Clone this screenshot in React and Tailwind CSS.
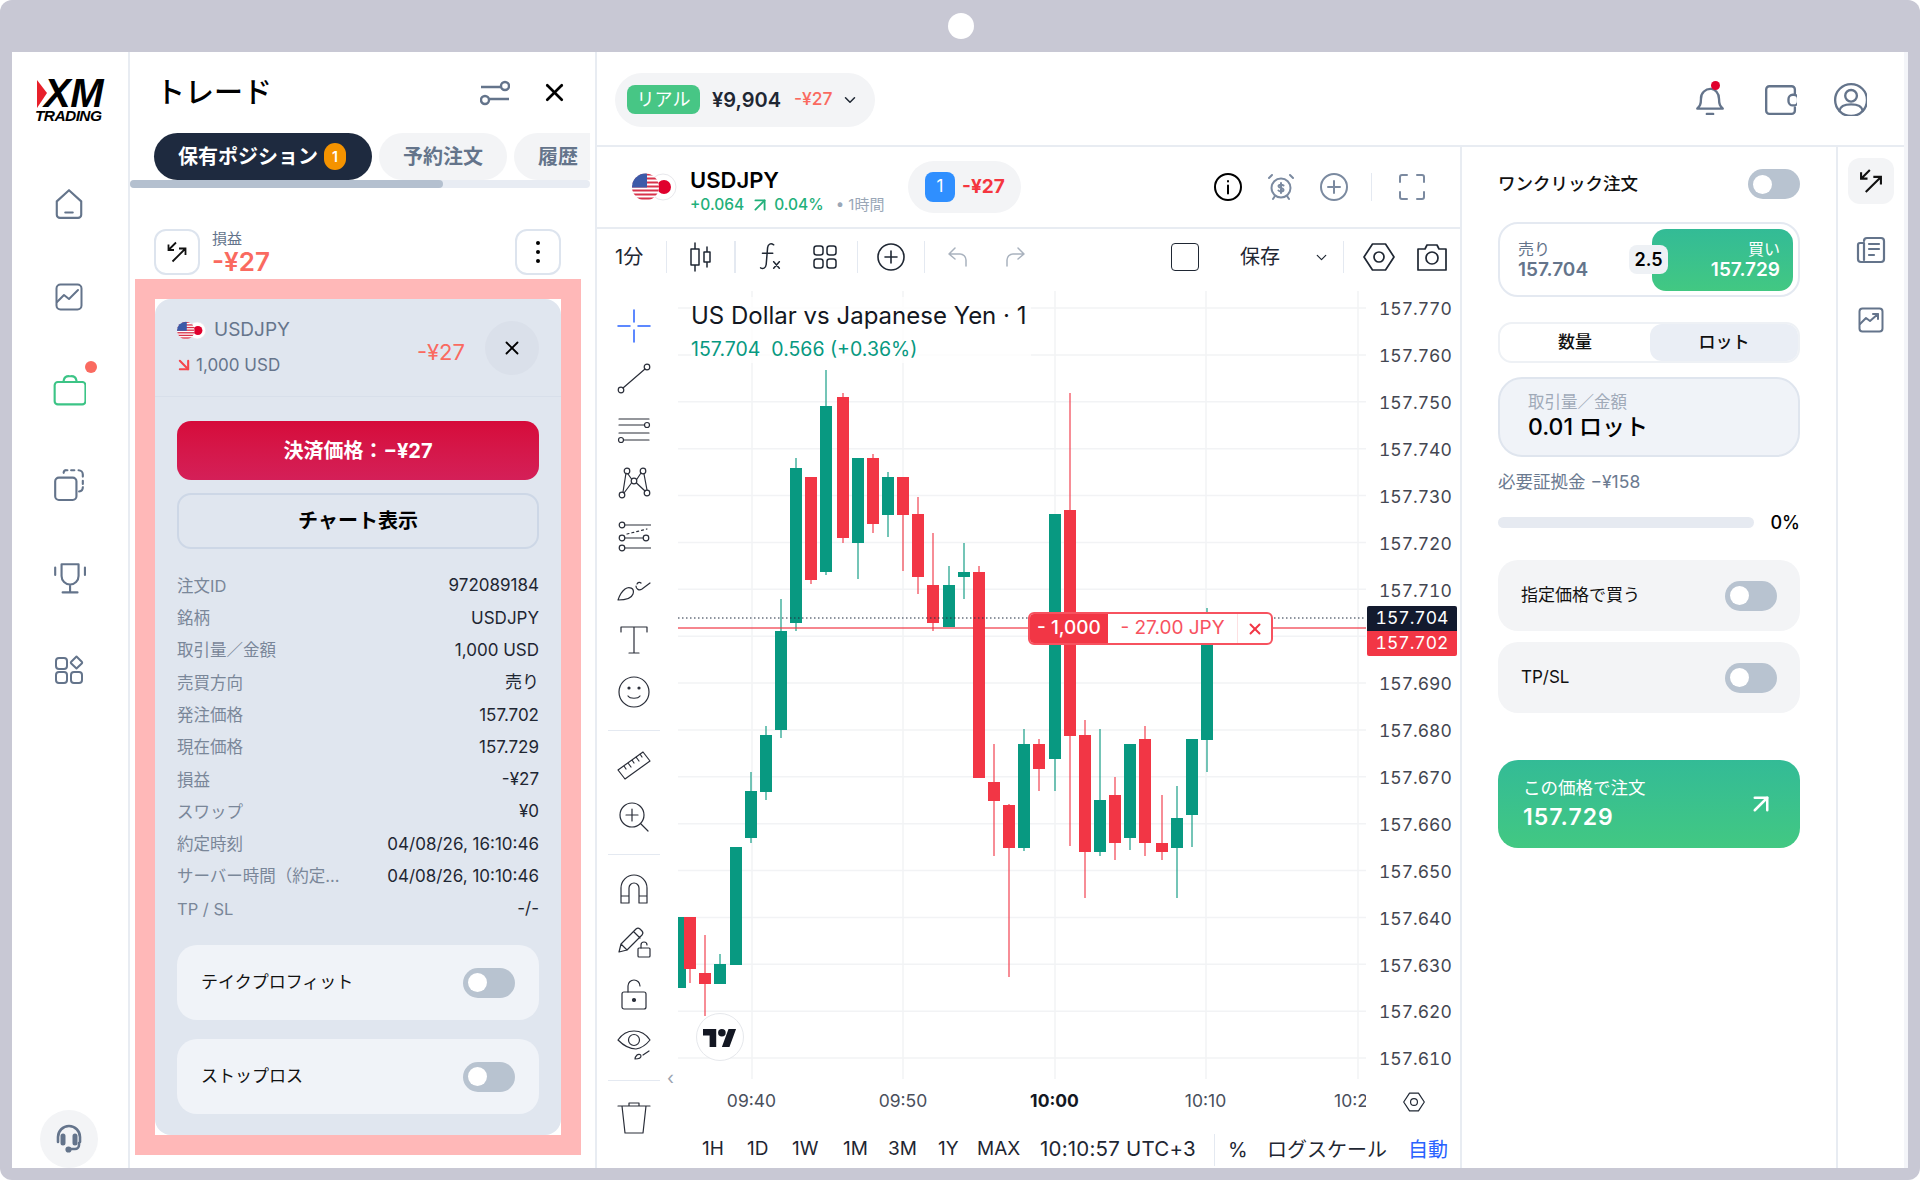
import { useId } from 'react'
import { X, ChevronDown, ArrowUpRight, ArrowDownRight } from 'lucide-react'

const SLATE = '#64748b'

const candles = [
  [680, 'g', 917, 917, 988, 988], [690, 'r', 917, 917, 969, 983], [705, 'r', 935, 973, 984, 1016],
  [720, 'g', 954, 964, 984, 984], [736, 'g', 847, 847, 965, 965], [751, 'g', 772, 791, 838, 843],
  [766, 'g', 726, 735, 792, 800], [781, 'g', 599, 631, 730, 738], [796, 'g', 458, 468, 623, 631],
  [811, 'r', 477, 477, 580, 584], [826, 'g', 370, 406, 572, 575], [843, 'r', 393, 397, 538, 543],
  [858, 'g', 458, 458, 543, 579], [873, 'r', 454, 458, 524, 533], [888, 'g', 472, 477, 515, 537],
  [903, 'r', 477, 477, 515, 571], [918, 'r', 497, 514, 577, 594], [933, 'r', 533, 585, 623, 631],
  [949, 'g', 566, 585, 627, 627], [964, 'g', 543, 572, 577, 599], [979, 'r', 566, 572, 778, 778],
  [994, 'r', 744, 782, 801, 856], [1009, 'r', 804, 805, 848, 977], [1024, 'g', 729, 744, 848, 851],
  [1039, 'r', 739, 744, 769, 791], [1055, 'g', 514, 514, 759, 791], [1070, 'r', 393, 510, 736, 846],
  [1085, 'r', 720, 735, 852, 898], [1100, 'g', 729, 800, 852, 856], [1115, 'r', 777, 795, 843, 860],
  [1130, 'g', 744, 744, 838, 850], [1145, 'r', 726, 739, 843, 856], [1162, 'r', 795, 843, 852, 860],
  [1177, 'g', 786, 818, 848, 898], [1192, 'g', 739, 739, 815, 847], [1207, 'g', 608, 627, 740, 772],
]

const prices = ['157.770', '157.760', '157.750', '157.740', '157.730', '157.720', '157.710', '', '157.690', '157.680', '157.670', '157.660', '157.650', '157.640', '157.630', '157.620', '157.610']

const details = [
  ['注文ID', '972089184'], ['銘柄', 'USDJPY'], ['取引量／金額', '1,000 USD'], ['売買方向', '売り'],
  ['発注価格', '157.702'], ['現在価格', '157.729'], ['損益', '-¥27'], ['スワップ', '¥0'],
  ['約定時刻', '04/08/26, 16:10:46'], ['サーバー時間（約定時間）', '04/08/26, 10:10:46'], ['TP / SL', '-/-'],
]

function Flag({ className }) {
  const id = useId()
  return (
    <svg viewBox="0 0 46 28" className={className}>
      <clipPath id={id}><circle cx="13.5" cy="14" r="13.5" /></clipPath>
      <circle cx="31" cy="14" r="13" fill="#fff" stroke="#e8e8ec" />
      <circle cx="32" cy="14" r="7" fill="#e0002d" />
      <g clipPath={`url(#${id})`}>
        <rect width="28" height="28" fill="#fff" />
        {[0, 4, 8, 12, 16, 20, 24].map((y) => <rect key={y} y={y + 0.5} width="28" height="2" fill="#d8324a" />)}
        <rect width="15" height="14.5" fill="#3c5aa8" />
      </g>
    </svg>
  )
}

function Toggle() {
  return (
    <div className="flex h-[30px] w-[52px] items-center rounded-full bg-[#b8c3d0] pl-[5px]">
      <div className="h-[19px] w-[19px] rounded-full bg-white" />
    </div>
  )
}

function SwapIcon({ className }) {
  return (
    <svg viewBox="0 0 24 24" fill="none" stroke="#111" strokeWidth="1.8" className={className}>
      <path d="M11 2.5 3.5 10M3.5 4.5V10H9" />
      <path d="M7.5 21.5 20.5 8.5M14 8.5h6.5V15" />
    </svg>
  )
}

function Icon({ size = 32, box = 32, stroke = SLATE, width = 2, className, children }) {
  return (
    <svg width={size} height={size} viewBox={`0 0 ${box} ${box}`} fill="none" stroke={stroke} strokeWidth={width} strokeLinecap="round" strokeLinejoin="round" className={className}>
      {children}
    </svg>
  )
}

function Sidebar() {
  return (
    <div className="flex w-[118px] shrink-0 flex-col items-center border-r-2 border-[#e8ecf2] pr-[2px]">
      <div className="relative mt-[27px] h-[44px] w-[72px] shrink-0">
        <svg viewBox="0 0 10 28" className="absolute left-[4px] top-[1px] h-[28px] w-[10px]"><path d="M0 0 10 13 0 28Z" fill="#e8202a" /></svg>
        <div className="absolute left-[11px] top-[0px] text-[40px] font-black italic leading-[28px] tracking-[-0.5px] text-black [font-family:'Liberation_Sans',sans-serif]">XM</div>
        <div className="absolute left-[2px] top-[30px] text-[15.5px] font-bold italic leading-[14px] tracking-[-0.6px] text-black [font-family:'Liberation_Sans',sans-serif]">TRADING</div>
      </div>
      <div className="mt-[34px] flex flex-col">
        <div className="flex h-[93px] items-center justify-center">
          <Icon size={34}><path d="M4.5 13.5 16 3l11.5 10.5V26a3 3 0 0 1-3 3h-17a3 3 0 0 1-3-3Z" /><path d="M12.5 24h7" /></Icon>
        </div>
        <div className="flex h-[93px] items-center justify-center">
          <Icon size={32}><rect x="3.5" y="3.5" width="25" height="25" rx="4" /><path d="m4 21 7-7 5 4 9-9" /></Icon>
        </div>
        <div className="relative flex h-[94px] items-center justify-center">
          <Icon size={34} stroke="#3cc486"><rect x="2.5" y="8.5" width="29" height="21" rx="3" /><path d="M11 8.5V7a5 5 0 0 1 5-4h2a5 5 0 0 1 5 4v1.5" /></Icon>
          <div className="absolute left-[33px] top-[18px] h-[12px] w-[12px] rounded-full bg-[#fa6a60]" />
        </div>
        <div className="flex h-[93px] items-center justify-center">
          <Icon size={34}><rect x="3" y="10" width="20" height="21" rx="3.5" /><path d="M11 5.5V5a2.5 2.5 0 0 1 2.5-2h1M18 3h3M25 3a4 4 0 0 1 4 4v2M29 13v3M29 19a4 4 0 0 1-3.5 4" /></Icon>
        </div>
        <div className="flex h-[93px] items-center justify-center">
          <Icon size={34}><path d="M9 4h16v11a8 8 0 0 1-16 0ZM17 23v7M10 30.5h14M3 7v7M31 7v7" /></Icon>
        </div>
        <div className="flex h-[93px] items-center justify-center">
          <Icon size={32}><rect x="3" y="4" width="11" height="11" rx="3" /><rect x="3" y="18" width="11" height="11" rx="3" /><rect x="18" y="18" width="11" height="11" rx="3" /><path d="m23.5 2.5 5.5 5.5a1 1 0 0 1 0 1.2l-5.5 5.3-5.500-5.300a1 1 0 0 1 0-1.200Z" /></Icon>
        </div>
      </div>
      <div className="mt-auto flex h-[58px] w-[58px] items-center justify-center rounded-full bg-[#f3f4f6]">
        <Icon size={32} width="2.6"><path d="M5 19v-5a11 11 0 0 1 22 0v5" /><path d="M10 13v7M22 13v7" strokeWidth="5" /><path d="M26 20v2a4 4 0 0 1-4 4h-5" /><circle cx="15.500" cy="26.500" r="1.800" fill={SLATE} /></Icon>
      </div>
    </div>
  )
}

function TradePanel() {
  return (
    <div className="flex w-[467px] shrink-0 flex-col border-r-2 border-[#e8ecf2]">
      <div className="flex h-[81px] shrink-0 items-center justify-between pl-[26px] pr-[26px]">
        <div className="text-[29px] font-medium leading-[32px] text-black">トレード</div>
        <div className="flex items-center gap-[30px]">
          <svg width="30" height="26" viewBox="0 0 30 26" fill="none" stroke={SLATE} strokeWidth="2.400"><path d="M1 7h20M9 19h20" /><circle cx="25" cy="6" r="4" /><circle cx="5" cy="20" r="4" /></svg>
          <X size={29} stroke="#000" strokeWidth={2.200} />
        </div>
      </div>
      <div className="flex h-[47px] w-[460px] shrink-0 gap-[7px] overflow-hidden pl-[24px]">
        <div className="flex h-[47px] w-[218px] shrink-0 items-center rounded-full bg-[#1e2a3f] pl-[24px] text-[20px] font-semibold text-white">
          保有ポジション
          <span className="ml-[6px] flex h-[27px] w-[22px] items-center justify-center rounded-full bg-[#f59300] text-[14px]">1</span>
        </div>
        <div className="flex h-[47px] w-[128px] shrink-0 items-center justify-center rounded-full bg-[#f3f4f6] text-[20px] font-semibold text-[#64748b]">予約注文</div>
        <div className="flex h-[47px] w-[100px] shrink-0 items-center rounded-full bg-[#f3f4f6] pl-[24px] text-[20px] font-semibold text-[#64748b]">履歴</div>
      </div>
      <div className="h-[8px] w-[460px] shrink-0 rounded-full bg-[#e8ecf3]">
        <div className="h-[8px] w-[313px] rounded-full bg-[#b4c0cf]" />
      </div>
      <div className="ml-[24px] mt-[41px] flex h-[46px] w-[407px] shrink-0 items-center">
        <div className="flex h-[46px] w-[46px] items-center justify-center rounded-xl border-2 border-[#dde4ee]"><SwapIcon className="h-[24px] w-[24px]" /></div>
        <div className="ml-[12px] mt-[2px] flex flex-col">
          <div className="text-[15px] leading-[18px] text-[#64748b]">損益</div>
          <div className="text-[26px] font-semibold leading-[28px] text-[#fa6a60]">-¥27</div>
        </div>
        <div className="ml-auto flex h-[46px] w-[46px] flex-col items-center justify-center gap-[5px] rounded-xl border-2 border-[#dde4ee]">
          <div className="h-[4px] w-[4px] rounded-full bg-black" />
          <div className="h-[4px] w-[4px] rounded-full bg-black" />
          <div className="h-[4px] w-[4px] rounded-full bg-black" />
        </div>
      </div>
      <div className="ml-[5px] mt-[4px] h-[876px] w-[446px] shrink-0 border-[20px] border-[#ffb8b8] bg-white">
        <div className="flex h-full flex-col rounded-[16px] bg-[#e0e6ef]">
          <div className="flex h-[98px] shrink-0 items-center justify-between border-b border-[#d8dfea] px-[22px]">
            <div className="flex flex-col">
              <div className="flex items-center gap-[7px] text-[19px] leading-[24px] text-[#66758c]">
                <Flag className="h-[19px] w-[30px]" />
                USDJPY
              </div>
              <div className="mt-[11px] flex items-center gap-[3px] text-[17px] leading-[24px] text-[#66758c]">
                <ArrowDownRight size={20} stroke="#f5444b" strokeWidth={2.500} className="ml-[-3px] mr-[-1px]" />
                1,000 USD
              </div>
            </div>
            <div className="flex items-center gap-[20px]">
              <div className="mt-[9px] text-[22px] text-[#fa6a60]">-¥27</div>
              <div className="flex h-[54px] w-[54px] items-center justify-center rounded-full bg-[#dae0ea]"><X size={22} stroke="#000" strokeWidth={2} /></div>
            </div>
          </div>
          <div className="flex flex-1 flex-col px-[22px] pb-[20px] pt-[24px]">
            <div className="flex h-[59px] shrink-0 items-center justify-center rounded-[14px] bg-gradient-to-b from-[#d60a3a] to-[#d41f58] text-[20px] font-bold text-white">決済価格：−¥27</div>
            <div className="mt-[13px] flex h-[56px] shrink-0 items-center justify-center rounded-[14px] border-2 border-[#cdd7e6] text-[20px] font-bold text-black">チャート表示</div>
            <div className="mt-[21px] flex flex-col">
              {details.map(([k, v]) => (
                <div key={k} className="flex h-[32.300px] items-center justify-between text-[16.500px]">
                  <div className="w-[170px] truncate text-[#7a8799]">{k}</div>
                  <div className="text-[17px] text-[#1f2733]">{v}</div>
                </div>
              ))}
            </div>
            <div className="mt-[20px] flex h-[75px] shrink-0 items-center justify-between rounded-[20px] bg-[#f0f3f8] pl-[24px] pr-[24px] text-[17px] text-[#111]">
              テイクプロフィット
              <Toggle />
            </div>
            <div className="mt-[19px] flex h-[75px] shrink-0 items-center justify-between rounded-[20px] bg-[#f0f3f8] pl-[24px] pr-[24px] text-[17px] text-[#111]">
              ストップロス
              <Toggle />
            </div>
          </div>
        </div>
      </div>
    </div>
  )
}

function TopBar() {
  return (
    <div className="flex h-[95px] shrink-0 items-center justify-between border-b-2 border-[#e8ecf2] pl-[18px] pr-[37px]">
      <div className="mt-[2px] flex h-[54px] w-[260px] items-center rounded-full bg-[#f3f4f6] pl-[12px]">
        <div className="flex h-[29px] w-[73px] items-center justify-center rounded-lg bg-[#47c685] text-[18px] text-white">リアル</div>
        <div className="ml-[12px] text-[20px] font-semibold text-[#1f2733]">¥9,904</div>
        <div className="ml-[13px] text-[17.500px] font-medium text-[#fa6a60]">-¥27</div>
        <ChevronDown size={18} stroke="#1f2733" strokeWidth={2} className="ml-[8px]" />
      </div>
      <div className="flex items-center gap-[36px]">
        <div className="relative">
          <Icon size={34} width="2.200"><path d="M4 25c2-2 3.500-3 3.500-9a9 9 0 0 1 10-9.500c3 .5 7 3.500 7 9.500 0 6 1.500 7 3.500 9ZM13 30h6" /></Icon>
          <div className="absolute left-[18px] top-[-1px] h-[9px] w-[9px] rounded-full bg-[#e0002d]" />
        </div>
        <Icon size={34} width="2.200"><path d="M30 11V7a3 3 0 0 0-3-3H6a3 3 0 0 0-3 3v20a3 3 0 0 0 3 3h21a3 3 0 0 0 3-3v-3" /><rect x="24" y="12" width="9" height="10" rx="4" /></Icon>
        <Icon size={34} width="2.200"><circle cx="17" cy="17" r="15" /><circle cx="17" cy="13" r="5.500" /><path d="M6 27c1-5 6-6 11-6s10 1 11 6" /></Icon>
      </div>
    </div>
  )
}

function SymbolRow() {
  return (
    <div className="flex h-[82px] shrink-0 items-center border-b-2 border-[#e8ecf2] pl-[35px] pr-[34px]">
      <Flag className="h-[28px] w-[46px] shrink-0" />
      <div className="ml-[12px] mt-[7px] flex w-[218px] shrink-0 flex-col">
        <div className="text-[22px] font-semibold leading-[28px] text-black">USDJPY</div>
        <div className="flex items-center text-[15.500px] font-medium leading-[22px] text-[#22b07a]">
          +0.064
          <ArrowUpRight size={22} stroke="#22b07a" strokeWidth={2} className="ml-[5px] mr-[3px]" />
          0.04%
          <span className="ml-[12px] text-[15px] font-normal text-[#9aa7b7]">• 1時間</span>
        </div>
      </div>
      <div className="flex h-[52px] w-[113px] shrink-0 items-center rounded-full bg-[#f3f4f6] pl-[17px]">
        <div className="flex h-[30px] w-[30px] items-center justify-center rounded-lg bg-[#2f8fff] text-[17px] text-white">1</div>
        <div className="ml-[7px] text-[19px] font-bold text-[#f5363f]">-¥27</div>
      </div>
      <div className="ml-auto flex items-center">
        <Icon size={28} box={28} stroke="#000" width="2"><circle cx="14" cy="14" r="13" /><path d="M14 12.500v8M14 8v.5" /></Icon>
        <Icon size={28} box={28} stroke="#7b8aa0" width="2" className="ml-[25px]"><circle cx="14" cy="15" r="9.500" /><path d="M2 5l3-3M26 5l-3-3M6 26l2-3M22 26l-2-3M14 10v10M16.500 12.500c-1-1-5-1.500-5 .7s5 1.300 5 3.600-4 2-5 .7" /></Icon>
        <Icon size={28} box={28} stroke="#7b8aa0" width="2" className="ml-[25px]"><circle cx="14" cy="14" r="13" /><path d="M14 8v12M8 14h12" /></Icon>
        <div className="ml-[23px] h-[28px] w-[1px] bg-[#e4e9f1]" />
        <Icon size={28} box={28} stroke="#7b8aa0" width="2" className="ml-[26px]"><path d="M9 2H4a2 2 0 0 0-2 2v5M19 2h5a2 2 0 0 1 2 2v5M9 26H4a2 2 0 0 1-2-2v-5M19 26h5a2 2 0 0 0 2-2v-5" /></Icon>
      </div>
    </div>
  )
}

function Sep({ className = 'h-[32px]' }) {
  return <div className={`w-[1px] shrink-0 bg-[#e4e9f1] ${className}`} />
}

function Hexagon({ size = 32 }) {
  return (
    <Icon size={size} box={32} stroke="#1f2733" width="1.700">
      <path d="M9.500 3h13L31 16l-8.500 13h-13L1 16Z" /><circle cx="16" cy="16" r="5" />
    </Icon>
  )
}

function ToolBar() {
  return (
    <div className="flex h-[56px] shrink-0 items-center pl-[18px]">
      <div className="w-[51px] shrink-0 text-[20px] text-[#1f2733]">1分</div>
      <Sep />
      <div className="flex w-[67px] shrink-0 justify-center">
        <Icon size={30} box={30} stroke="#1f2733" width="1.500"><path d="M9 1v28M21 5v20" /><rect x="5" y="7" width="8" height="16" fill="#fff" /><rect x="18" y="10" width="6" height="10" fill="#fff" /></Icon>
      </div>
      <Sep className="h-[32px] w-[2px]" />
      <div className="flex w-[66px] shrink-0 justify-center">
        <Icon size={30} box={32} stroke="#1f2733" width="1.600"><path d="M21 3c-3-2-6-1-6.500 3L13 24c-.5 4-3.500 5-6 3.500M9 12h11M21 21l6 7M27 21l-6 7" /></Icon>
      </div>
      <div className="mr-[9px] flex w-[46px] shrink-0 justify-center">
        <Icon size={26} box={26} stroke="#1f2733" width="1.500"><rect x="2" y="2" width="9" height="9" rx="2.500" /><rect x="15" y="2" width="9" height="9" rx="2.500" /><rect x="2" y="15" width="9" height="9" rx="2.500" /><rect x="15" y="15" width="9" height="9" rx="2.500" /></Icon>
      </div>
      <Sep />
      <div className="flex w-[66px] shrink-0 justify-center">
        <Icon size={28} box={28} stroke="#1f2733" width="1.600"><circle cx="14" cy="14" r="13" /><path d="M14 8v12M8 14h12" /></Icon>
      </div>
      <Sep />
      <div className="flex w-[66px] shrink-0 justify-center">
        <Icon size={24} box={24} stroke="#a9b2be" width="1.500"><path d="M9 3 3 9l6 5M3 9h11a6 6 0 0 1 6 6v6" /></Icon>
      </div>
      <div className="flex w-[48px] shrink-0 justify-center">
        <Icon size={24} box={24} stroke="#a9b2be" width="1.500"><path d="m15 3 6 6-6 5M21 9H10a6 6 0 0 0-6 6v6" /></Icon>
      </div>
      <div className="ml-auto flex items-center">
        <div className="h-[28px] w-[28px] rounded-[4px] border-[1.5px] border-[#1f2733]" />
        <div className="ml-[41px] text-[20px] text-[#1f2733]">保存</div>
        <div className="ml-[27px] flex w-[28px] justify-center"><ChevronDown size={17} stroke="#1f2733" strokeWidth={1.700} /></div>
        <Sep className="ml-[8px] h-[32px]" />
        <div className="flex w-[66px] justify-center pl-[3px]"><Hexagon /></div>
        <div className="mr-[6px] flex w-[44px] justify-center">
          <Icon size={32} box={32} stroke="#1f2733" width="1.700"><path d="M2 8h7l2-4h10l2 4h7v21H2Z" /><circle cx="16" cy="17" r="6" /></Icon>
        </div>
      </div>
    </div>
  )
}

function Tool({ children }) {
  return <div className="flex h-[52.300px] shrink-0 items-center justify-center">{children}</div>
}

function TV({ children }) {
  return <Icon size={34} box={34} stroke="#2a2e39" width="1.200">{children}</Icon>
}

function Divider({ className }) {
  return <div className={`h-[1px] w-[52px] shrink-0 bg-[#e4e9f1] ${className}`} />
}

function DrawTools() {
  return (
    <div className="relative flex w-[81px] shrink-0 flex-col items-center pr-[7px] pt-[15px]">
      <Tool><TV><path d="M17 1v12M17 21v12M1 17h12M21 17h12" stroke="#2962ff" strokeWidth="1.500" /></TV></Tool>
      <Tool><TV><circle cx="4" cy="29" r="2.800" /><circle cx="30" cy="6" r="2.800" /><path d="M6 27 28 8" /></TV></Tool>
      <Tool><TV><path d="M2 5h30M2 11h25M2 19h30M7 26h25" /><circle cx="30" cy="11" r="2.500" /><circle cx="4" cy="26" r="2.500" /></TV></Tool>
      <Tool><TV><circle cx="10" cy="5" r="2.800" /><circle cx="26" cy="5" r="2.800" /><circle cx="17" cy="15" r="2.800" /><circle cx="5" cy="29" r="2.800" /><circle cx="30" cy="27" r="2.800" /><path d="M11 8 14.500 13M24 7 20 13M9 7 6 26M27 8l3 16M14.500 17 7 27M19.500 17 28 25" /></TV></Tool>
      <div className="mt-[2px]"><Tool><TV><circle cx="5" cy="5" r="2.800" /><circle cx="5" cy="18" r="2.800" /><circle cx="29" cy="18" r="2.800" /><circle cx="5" cy="28" r="2.800" /><path d="M8 5h26M8 18h18M8 28h26" /><path d="M10 14l20-5" strokeDasharray="2 3" /></TV></Tool></div>
      <div className="mt-[-4px]"><Tool><TV><path d="M1 31c4 0 13 0 15-6s-4-8-8-5-6 8-7 11Z" /><path d="M19 17c0 3 3 5 6 3l8-6M20 15c1-2 3-2 4-1" /></TV></Tool></div>
      <div className="mt-[2px]"><Tool><TV><path d="M4 9V4h26v5M17 4v26M12 30h10" /></TV></Tool></div>
      <Tool><TV><circle cx="17" cy="17" r="15" /><circle cx="12" cy="13" r="1" fill="#2a2e39" /><circle cx="22" cy="13" r="1" fill="#2a2e39" /><path d="M11 21c2 3 10 3 12 0" /></TV></Tool>
      <Divider className="mt-[12px]" />
      <div className="mt-[5px]"><Tool><TV><path d="M1 24 26 6l7 9-25 18ZM7 20l2 3M11 17l3 4M15 14l2 3M19 11l3 4M23 8l2 3" /></TV></Tool></div>
      <div className="mt-[3px]"><Tool><TV><circle cx="15" cy="14" r="12" /><path d="M15 8v12M9 14h12M24 23l7 7" /></TV></Tool></div>
      <Divider className="mt-[10px]" />
      <div className="mt-[8px]"><Tool><TV><path d="M4 31V16a13 13 0 0 1 26 0v15h-8V16a5 5 0 0 0-10 0v15ZM4 24h8M22 24h8" /></TV></Tool></div>
      <Tool><TV><path d="M2 28l2-8L19 5a3 3 0 0 1 4 0l2 2a3 3 0 0 1 0 4L10 26ZM4 20l6 6M17 8l6 6" /><rect x="21" y="24" width="12" height="9" rx="1" /><path d="M24 24v-3a3 3 0 0 1 6 0" /></TV></Tool>
      <Tool><TV><rect x="5" y="15" width="24" height="17" rx="2" /><path d="M11 15V9a6 6 0 0 1 12 0" /><circle cx="17" cy="23" r="1.500" fill="#2a2e39" /></TV></Tool>
      <div className="mt-[-3px]"><Tool><TV><path d="M1 14c8-12 24-12 32 0-4 5-8 8-14 9-7 0-13-4-18-9Z" /><circle cx="17" cy="14" r="5.500" /><path d="M18 33c3 0 6-1 6-3s-3-2-4-1-2 3-2 4ZM26 29l6-4" /></TV></Tool></div>
      <Divider className="mt-[11px]" />
      <div className="mt-[10px]"><Tool><TV><path d="M1 6h32M12 6V3h10v3M5 6l3 27h18l3-27" /></TV></Tool></div>
      <div className="absolute left-[70px] top-[784px] text-[18px] leading-[18px] text-[#9aa3af]">‹</div>
    </div>
  )
}

function Chart() {
  return (
    <div className="relative h-[794px] w-[688px] shrink-0 overflow-hidden">
      <svg viewBox="678 285 688 794" className="block h-[794px] w-[688px]">
        {prices.map((p, i) => <line key={i} x1="678" x2="1366" y1={308 + i * 46.875} y2={308 + i * 46.875} stroke="#f2f3f5" strokeWidth="1.500" />)}
        {[752, 903, 1055, 1206, 1358].map((x) => <line key={x} x1={x} x2={x} y1="291" y2="1079" stroke="#f2f3f5" strokeWidth="1.500" />)}
        {candles.map(([x, c, wt, bt, bb, wb]) => {
          const color = c === 'g' ? '#089981' : '#f23645'
          return (
            <g key={x}>
              <line x1={x} x2={x} y1={wt} y2={wb} stroke={color} strokeWidth="1.500" opacity="0.75" />
              <rect x={x - 6} y={bt} width="12" height={bb - bt} fill={color} />
            </g>
          )
        })}
        <line x1="678" x2="1366" y1="618" y2="618" stroke="#1e2a3f" strokeWidth="1" strokeDasharray="1.500 2.500" />
        <line x1="678" x2="1366" y1="628" y2="628" stroke="#f23645" strokeWidth="1.500" opacity="0.8" />
      </svg>
      <div className="absolute left-[13px] top-[12px] flex flex-col bg-white/80 pr-[5px]">
        <div className="text-[24px] leading-[38px] text-[#131722]">US Dollar vs Japanese Yen · 1</div>
        <div className="text-[19.500px] leading-[28px] text-[#089981]">157.704&nbsp; 0.566 (+0.36%)</div>
      </div>
      <div className="absolute left-[350px] top-[327px] flex h-[33px] w-[245px] items-center overflow-hidden rounded-[6px] border-2 border-[#f7525f] bg-white text-[19px]">
        <div className="flex h-full w-[78px] items-center justify-center bg-[#f23645] font-medium text-white">- 1,000</div>
        <div className="flex h-full w-[130px] items-center justify-center border-r border-[#fde0e2] text-[#f7525f]">- 27.00 JPY</div>
        <div className="flex flex-1 items-center justify-center"><X size={18} stroke="#f23645" strokeWidth={2.600} /></div>
      </div>
      <div className="absolute left-[18px] top-[728px] flex h-[48px] w-[48px] items-center justify-center rounded-full border border-[#e6e8ec] bg-white">
        <svg width="34" height="19" viewBox="0 0 36 20" fill="#131722"><path d="M14 20H7V8H0V1h14ZM20 20 27 1h8l-7 19Z" /><circle cx="20" cy="5" r="4" /></svg>
      </div>
    </div>
  )
}

function ChartColumn() {
  return (
    <div className="flex w-[865px] shrink-0 flex-col border-r-2 border-[#e8ecf2]">
      <SymbolRow />
      <ToolBar />
      <div className="flex flex-1">
        <DrawTools />
        <div className="flex w-[783px] shrink-0 flex-col">
          <div className="flex h-[794px] shrink-0">
            <Chart />
            <div className="relative w-[95px] shrink-0 pl-[13px] pt-[1px] text-[17.500px] tabular-nums text-[#434651]">
              {prices.map((p, i) => <div key={i} className="flex h-[46.875px] items-center">{p}</div>)}
              <div className="absolute left-[1px] top-[321px] flex h-[25px] w-[90px] items-center justify-center rounded-t-[2px] bg-[#131a2e] text-white">157.704</div>
              <div className="absolute left-[1px] top-[346px] flex h-[25px] w-[90px] items-center justify-center rounded-b-[2px] bg-[#f23645] text-white">157.702</div>
            </div>
          </div>
          <div className="flex h-[43px] shrink-0 items-center pt-[2px]">
            <div className="flex w-[688px] shrink-0 overflow-hidden text-[17.500px] text-[#4a4f5c]">
              <div className="ml-[-2px] flex">
                <div className="w-[151px] shrink-0 text-center">09:40</div>
                <div className="w-[152px] shrink-0 text-center">09:50</div>
                <div className="w-[151px] shrink-0 text-center font-bold text-[#131722]">10:00</div>
                <div className="w-[151px] shrink-0 text-center">10:10</div>
                <div className="w-[151px] shrink-0 text-center">10:20</div>
              </div>
            </div>
            <div className="ml-[37px]"><Hexagon size={22} /></div>
          </div>
          <div className="flex h-[46px] shrink-0 items-center pl-[24px] pt-[9px] text-[19px] text-[#1f2733]">
            <div className="w-[45px] shrink-0">1H</div>
            <div className="w-[45px] shrink-0">1D</div>
            <div className="w-[51px] shrink-0">1W</div>
            <div className="w-[45px] shrink-0">1M</div>
            <div className="w-[50px] shrink-0">3M</div>
            <div className="w-[39px] shrink-0">1Y</div>
            <div className="w-[63px] shrink-0">MAX</div>
            <div className="w-[174px] shrink-0 whitespace-nowrap text-[20.500px] tracking-[0.2px]">10:10:57 UTC+3</div>
            <Sep className="h-[32px]" />
            <div className="ml-[13px] w-[39px] shrink-0 text-[20px]">%</div>
            <div className="w-[141px] shrink-0 text-[20px]">ログスケール</div>
            <div className="text-[20px] text-[#2962ff]">自動</div>
          </div>
        </div>
      </div>
    </div>
  )
}

function OrderPanel() {
  return (
    <div className="flex w-[374px] shrink-0 flex-col px-[36px] pt-[22px]">
      <div className="flex h-[30px] shrink-0 items-center justify-between text-[17.500px] font-medium text-[#111]">
        ワンクリック注文
        <Toggle />
      </div>
      <div className="mt-[23px] flex h-[75px] shrink-0 items-center rounded-[20px] border-2 border-[#e4e9f1] pl-[18px] pr-[5px]">
        <div className="flex flex-col text-[#64748b]">
          <div className="text-[16px] leading-[20px]">売り</div>
          <div className="text-[19px] font-semibold leading-[22px]">157.704</div>
        </div>
        <div className="relative ml-auto flex h-[62px] w-[141px] flex-col items-end justify-center rounded-[14px] bg-gradient-to-b from-[#33bb96] to-[#42c882] pr-[13px] text-white">
          <div className="text-[16px] leading-[20px]">買い</div>
          <div className="text-[19px] font-semibold leading-[22px]">157.729</div>
          <div className="absolute left-[-23px] top-[16px] flex h-[29px] w-[39px] items-center justify-center rounded-lg bg-[#eef1f5] text-[18px] font-semibold text-black">2.5</div>
        </div>
      </div>
      <div className="mt-[25px] flex h-[41px] shrink-0 rounded-[14px] border-2 border-[#eef1f5] text-[17px] font-medium text-[#111]">
        <div className="flex w-[150px] items-center justify-center">数量</div>
        <div className="flex flex-1 items-center justify-center rounded-[12px] bg-[#eaeef5]">ロット</div>
      </div>
      <div className="mt-[14px] flex h-[80px] shrink-0 flex-col justify-center rounded-[24px] border-2 border-[#dfe5ee] bg-[#f0f3f8] pb-[3px] pl-[28px]">
        <div className="text-[16.500px] leading-[22px] text-[#a0aab8]">取引量／金額</div>
        <div className="text-[23px] font-medium leading-[28px] text-black">0.01 ロット</div>
      </div>
      <div className="mt-[13px] h-[24px] shrink-0 text-[17.500px] leading-[24px] text-[#6b7a90]">必要証拠金 −¥158</div>
      <div className="mt-[16px] flex h-[24px] shrink-0 items-center justify-between">
        <div className="h-[11px] w-[256px] rounded-full bg-[#e6eaf1]" />
        <div className="text-[18px] font-medium text-black">0%</div>
      </div>
      <div className="mt-[26px] flex h-[71px] shrink-0 items-center justify-between rounded-[20px] bg-[#f3f4f6] pl-[23px] pr-[23px] text-[17px] text-[#111]">
        指定価格で買う
        <Toggle />
      </div>
      <div className="mt-[11px] flex h-[71px] shrink-0 items-center justify-between rounded-[20px] bg-[#f3f4f6] pl-[23px] pr-[23px] text-[17px] text-[#111]">
        TP/SL
        <Toggle />
      </div>
      <div className="mt-[47px] flex h-[88px] shrink-0 items-center justify-between rounded-[20px] bg-gradient-to-b from-[#33bb96] to-[#42c882] pl-[25px] pr-[24px] text-white">
        <div className="flex flex-col">
          <div className="text-[17.500px] leading-[26px]">この価格で注文</div>
          <div className="text-[23px] font-semibold leading-[32px] tracking-[1px]">157.729</div>
        </div>
        <ArrowUpRight size={30} stroke="#fff" strokeWidth={2} />
      </div>
    </div>
  )
}

function FarRight() {
  return (
    <div className="flex flex-1 flex-col items-center border-l-2 border-[#e8ecf2] pt-[11px]">
      <div className="flex h-[46px] w-[46px] items-center justify-center rounded-xl bg-[#f3f4f6]"><SwapIcon className="h-[28px] w-[28px]" /></div>
      <div className="mt-[31px]">
        <Icon size={30} box={30} width="2.200"><path d="M8 6a3 3 0 0 1 3-3h14a3 3 0 0 1 3 3v18a3 3 0 0 1-3 3H5a3 3 0 0 1-3-3V10a2 2 0 0 1 2-2h4v17M13 9h10M13 14h10M13 20h5" /></Icon>
      </div>
      <div className="mt-[42px]">
        <Icon size={26} box={26} width="2"><rect x="1.500" y="1.500" width="23" height="23" rx="3" /><path d="m2 17 6-6 4 3 8-7M15 7h5v5" /></Icon>
      </div>
    </div>
  )
}

export default function App() {
  return (
    <div className="h-[1180px] w-[1920px] overflow-hidden bg-white text-[#111] [font-family:Inter,'Noto_Sans_CJK_JP',sans-serif]">
      <div className="relative flex h-full flex-col rounded-[12px] bg-[#c8c8d4] pb-[12px] pl-[12px] pr-[12px] pt-[52px]">
        <div className="absolute left-[948px] top-[13px] h-[26px] w-[26px] rounded-full bg-white" />
        <div className="flex flex-1 overflow-hidden bg-white">
          <Sidebar />
          <TradePanel />
          <div className="flex w-[1307px] shrink-0 flex-col">
            <TopBar />
            <div className="flex flex-1">
              <ChartColumn />
              <OrderPanel />
              <FarRight />
            </div>
          </div>
          <div className="w-[4px] shrink-0 bg-[#f4f5f9]" />
        </div>
      </div>
    </div>
  )
}
